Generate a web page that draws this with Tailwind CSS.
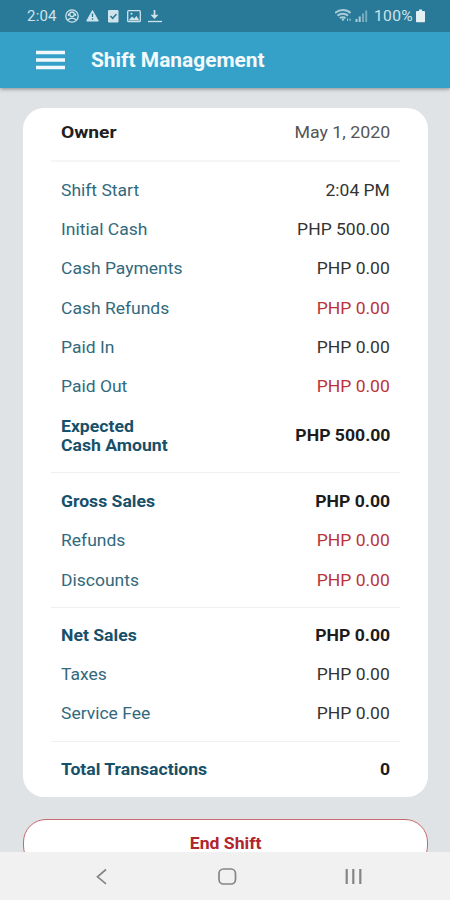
<!DOCTYPE html>
<html lang="en">
<head>
<meta charset="utf-8">
<title>Shift Management</title>
<script src="https://cdn.jsdelivr.net/npm/@tailwindcss/browser@4"></script>
</head>
<body class="h-[900px] w-[450px] overflow-hidden bg-[#dfe3e6] font-['Roboto',sans-serif] flex flex-col">
<header class="relative z-10 shrink-0 bg-[#35a1c9] shadow-[0_1px_4px_rgba(0,0,0,0.4)]">
  <div class="flex h-8 items-center bg-[#297a98] pl-[27px] pr-[25px] text-[#cfe3eb]">
    <span class="w-[38px] text-[15px] tracking-[0.2px]">2:04</span>
    <svg class="block" width="98" height="16" viewBox="65 8 98 16" fill="none" stroke="#cfe3eb" stroke-width="1.3">
      <circle cx="72" cy="16" r="6.2"/><circle cx="72" cy="14.3" r="2.3"/><path d="M68 20.3c1-3 7-3 8 0M68.5 13.5v2.5M75.500 13.500v2.500"/>
      <path d="M92.500 10.500l5.800 10.500H86.700z" fill="#cfe3eb" stroke-linejoin="round" stroke-width="1"/><path d="M92.500 13.500v3.500M92.500 18.200v1.500" stroke="#297a98"/>
      <rect x="108" y="10" width="10.500" height="12.500" rx="1" fill="#cfe3eb" stroke="none"/><path d="M110.500 16l2.200 2.300 3.800-4.300" stroke="#297a98" stroke-width="1.500"/>
      <rect x="127.700" y="10.700" width="12.600" height="11" rx="1"/><path d="M128.500 20.500l3.500-4 2.300 2 2.200-2.500 3 4.500z" fill="#cfe3eb" stroke="none"/><circle cx="131.500" cy="13.800" r="1" fill="#cfe3eb" stroke="none"/>
      <path d="M154.500 10v6" stroke-width="1.700"/><path d="M150.500 14.800h8l-4 4.200z" fill="#cfe3eb" stroke="none"/><path d="M148 21.500h14"/>
    </svg>
    <svg class="ml-auto block" width="36" height="16" viewBox="334 8 36 16" fill="none" stroke="#a9cbd8" stroke-width="2">
      <path d="M334 13c4-4 11.500-4 15.500 0M336.500 15.800c2.700-2.700 8-2.700 10.500 0M339 18.300c1.500-1.500 4-1.500 5.500 0"/><circle cx="342" cy="19.500" r="1.200" fill="#a9cbd8" stroke="none"/><path d="M346.500 18.500v2.500M349 18.500v2.500" stroke-width="1"/>
      <path d="M355.500 22v-3M358.700 22v-5.500" stroke-width="2"/><path d="M362 22v-8.500M365.200 22V10.500" stroke-width="2" opacity=".6"/>
    </svg>
    <span class="ml-[3px] w-[41px] origin-left scale-x-[1.04] whitespace-nowrap text-[15px] tracking-[0.3px]">100%</span>
    <svg class="ml-[1px] block" width="9" height="14" viewBox="0 0 9 14" fill="#e2eff3"><path d="M3 .500h3V2h2a1 1 0 0 1 1 1v9.500a.8.800 0 0 1-.8.800H.8a.8.800 0 0 1-.8-.8V3a1 1 0 0 1 1-1h2z"/></svg>
  </div>
  <div class="flex h-14 items-center pl-9">
    <svg class="block" width="29" height="20" viewBox="0 0 29 20" fill="#f2f9fc"><path d="M0 .8h29v3.500H0zM0 8.300h29v3.500H0zM0 15.800h29v3.500H0z"/></svg>
    <h1 class="ml-[26px] origin-left scale-x-[1.045] whitespace-nowrap text-[20px] font-bold text-[#f4fafc]">Shift Management</h1>
  </div>
</header>

<main class="min-h-0 flex-1 overflow-hidden pl-[23px] pr-[22px] pt-5 text-[16px] text-[#2d2d2d]">
  <section class="h-[689px] rounded-[21px] bg-white pl-7 pr-7 [&_span]:scale-x-[1.093] [&_span:first-child]:origin-left [&_span:last-child]:origin-right">
    <div class="flex h-[54px] items-center justify-between border-b-2 border-[#f5f6f7] px-[10px] pb-[3px]"><span class="text-[17px] font-bold text-[#202020] scale-x-[1.13]!">Owner</span><span class="text-[#555] scale-x-[1.11]!">May 1, 2020</span></div>
    <div class="border-b border-[#eff0f1] pt-[9px] pb-[7px] px-[10px] text-[#32697d]">
      <div class="flex h-[39.300px] items-center justify-between"><span>Shift Start</span><span class="text-[#333]">2:04 PM</span></div>
      <div class="flex h-[39.300px] items-center justify-between"><span>Initial Cash</span><span class="text-[#333]">PHP 500.00</span></div>
      <div class="flex h-[39.300px] items-center justify-between"><span>Cash Payments</span><span class="text-[#333]">PHP 0.00</span></div>
      <div class="flex h-[39.300px] items-center justify-between"><span>Cash Refunds</span><span class="text-[#b9323a]">PHP 0.00</span></div>
      <div class="flex h-[39.300px] items-center justify-between"><span>Paid In</span><span class="text-[#333]">PHP 0.00</span></div>
      <div class="flex h-[39.300px] items-center justify-between"><span>Paid Out</span><span class="text-[#b9323a]">PHP 0.00</span></div>
      <div class="flex h-[58.500px] items-center justify-between font-bold"><span class="leading-[19px] text-[#17506a] scale-x-[1.1]!">Expected<br>Cash Amount</span><span class="text-[#1c1c1c] scale-x-[1.1]!">PHP 500.00</span></div>
    </div>
    <div class="border-b border-[#eff0f1] pt-[9px] pb-[7px] px-[10px] text-[#32697d]">
      <div class="flex h-[39.300px] items-center justify-between font-bold"><span class="text-[#17506a] scale-x-[1.1]!">Gross Sales</span><span class="text-[#1c1c1c] scale-x-[1.1]!">PHP 0.00</span></div>
      <div class="flex h-[39.300px] items-center justify-between"><span>Refunds</span><span class="text-[#b9323a]">PHP 0.00</span></div>
      <div class="flex h-[39.300px] items-center justify-between"><span>Discounts</span><span class="text-[#b9323a]">PHP 0.00</span></div>
    </div>
    <div class="border-b border-[#eff0f1] pt-[8px] pb-[7px] px-[10px] text-[#32697d]">
      <div class="flex h-[39.300px] items-center justify-between font-bold"><span class="text-[#17506a] scale-x-[1.1]!">Net Sales</span><span class="text-[#1c1c1c] scale-x-[1.1]!">PHP 0.00</span></div>
      <div class="flex h-[39.300px] items-center justify-between"><span>Taxes</span><span class="text-[#333]">PHP 0.00</span></div>
      <div class="flex h-[39.300px] items-center justify-between"><span>Service Fee</span><span class="text-[#333]">PHP 0.00</span></div>
    </div>
    <div class="flex h-[56px] items-center justify-between px-[10px] font-bold"><span class="text-[#17506a] scale-x-[1.1]!">Total Transactions</span><span class="text-[#1c1c1c] scale-x-[1.1]!">0</span></div>
  </section>
  <button class="mt-[22px] flex h-[50px] w-full items-center justify-center rounded-[23px] border-[1.500px] border-[#c4696f] bg-white text-[16px] font-bold text-[#b1262d]"><span class="scale-x-[1.1]">End Shift</span></button>
</main>

<nav class="relative z-10 flex h-12 shrink-0 items-center bg-[#f1f1f1]">
  <svg class="block" width="450" height="48" viewBox="0 0 450 48" fill="none" stroke="#858585" stroke-width="1.700">
    <path d="M106 17.500l-8.500 7.300 8.500 7"/>
    <rect x="219" y="17" width="16.500" height="15" rx="4.500"/>
    <path d="M346.700 17v15M353.300 17v15M360.300 17v15" stroke-width="2.200"/>
  </svg>
</nav>
</body>
</html>
